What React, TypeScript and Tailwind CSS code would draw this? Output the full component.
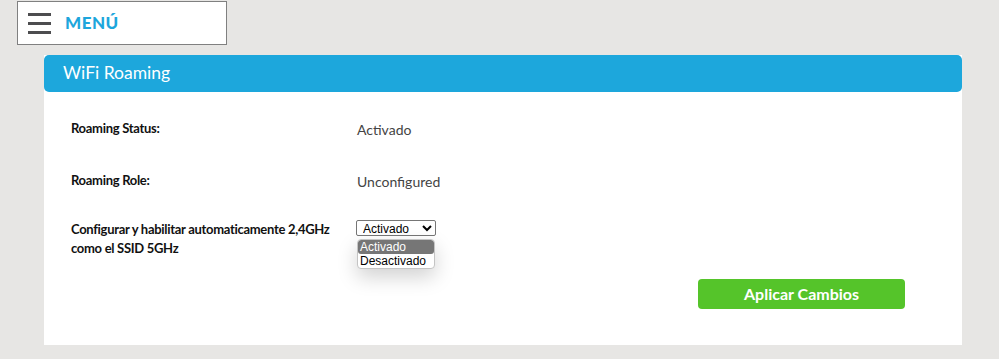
export default function App() {
  const font = { fontFamily: "Lato, 'Open Sans', sans-serif" };
  const arial = { fontFamily: "'Liberation Sans', Arial, sans-serif" };
  return (
    <div className="min-h-[359px] w-full bg-[#e7e6e4] pt-px" style={font}>
      {/* Menu box */}
      <div className="ml-[17px] flex h-[44px] w-[210px] items-center border border-[#808080] bg-white">
        <div className="ml-[10px] flex w-[23px] flex-col gap-[6px]">
          <span className="block h-[3px] w-full bg-[#4d4d4f]" />
          <span className="block h-[3px] w-full bg-[#4d4d4f]" />
          <span className="block h-[3px] w-full bg-[#4d4d4f]" />
        </div>
        <span className="ml-[14px] text-[17px] font-black tracking-[0.5px] text-[#1da6dc]">MENÚ</span>
      </div>

      {/* Card */}
      <div className="ml-[44px] mt-[10px] w-[918px] bg-white">
        <div className="flex h-[37px] items-center rounded-[5px] bg-[#1da7dc] pl-[19px]">
          <h1 className="text-[17.5px] font-normal text-white">WiFi Roaming</h1>
        </div>

        <div className="pl-[27px] pt-[27px] pb-[36px]">
          <div className="flex h-5 items-center">
            <div className="w-[286px] text-[13px] font-bold tracking-[-0.3px] text-[#111]">Roaming Status:</div>
            <div className="text-[14px] text-[#444]">Activado</div>
          </div>

          <div className="mt-[32px] flex h-5 items-center">
            <div className="w-[286px] text-[13px] font-bold tracking-[-0.3px] text-[#111]">Roaming Role:</div>
            <div className="text-[14px] text-[#444]">Unconfigured</div>
          </div>

          <div className="mt-[29px] flex h-[38px] items-start">
            <div className="w-[285px] text-[13px] font-bold leading-[19px] tracking-[-0.3px] text-[#111]">
              Configurar y habilitar automaticamente 2,4GHz
              <br />
              como el SSID 5GHz
            </div>
            <div className="relative flex">
              <select
                defaultValue="on"
                className="block h-[16px] w-[80px] rounded-[2px] border border-[#767676] bg-white pl-[2px] text-[12px] leading-[14px] text-black"
                style={arial}
              >
                <option value="on">Activado</option>
                <option value="off">Desactivado</option>
              </select>
              <div
                className="absolute left-px top-[19px] w-[78px] overflow-hidden rounded-[4px] border border-[#c4c4c4] bg-white text-[12px] leading-[14px] text-black shadow-[0_8px_20px_rgba(0,0,0,0.18)]"
                style={arial}
              >
                <div className="rounded-[3px] bg-[#767676] px-[2px] text-white">Activado</div>
                <div className="px-[2px]">Desactivado</div>
              </div>
            </div>
          </div>

          <div className="mt-[21px] flex">
            <button className="ml-[627px] flex h-[30px] w-[207px] items-center justify-center rounded-[4px] bg-[#55c42a] text-[16px] font-bold text-white">
              Aplicar Cambios
            </button>
          </div>
        </div>
      </div>
    </div>
  );
}
